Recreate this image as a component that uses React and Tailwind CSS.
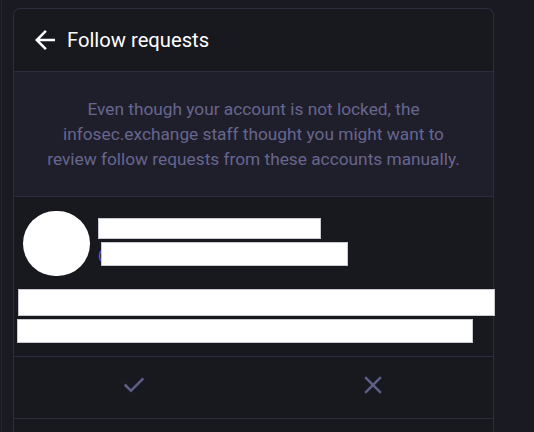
import React from 'react'

const font = { fontFamily: 'Roboto, "Noto Sans", sans-serif' }

function ArrowBack() {
  return (
    <svg viewBox="0 -960 960 960" className="w-[30px] h-[30px] fill-white shrink-0">
      <path d="m313-440 224 224-57 56-320-320 320-320 57 56-224 224h487v80H313Z" />
    </svg>
  )
}

function CheckIcon() {
  return (
    <svg viewBox="0 -960 960 960" className="w-[30px] h-[30px] fill-[#5f5e87]">
      <path d="M382-240 154-468l57-57 171 171 367-367 57 57-424 424Z" />
    </svg>
  )
}

function CloseIcon() {
  return (
    <svg viewBox="0 -960 960 960" className="w-[30px] h-[30px] fill-[#5f5e87]">
      <path d="m256-200-56-56 224-224-224-224 56-56 224 224 224-224 56 56-224 224 224 224-56 56-224-224-224 224Z" />
    </svg>
  )
}

export default function App() {
  return (
    <div style={font} className="w-[534px] h-[432px] overflow-hidden bg-[#191a22] flex">
      {/* left rail */}
      <div className="w-[12px] shrink-0 border-l border-[#24242f] ml-px" />

      {/* Column */}
      <div className="w-[481px] shrink-0 mt-[8px] bg-[#18181f] border border-b-0 border-[#2c2c3d] rounded-t-[7px] flex flex-col">
        {/* Header */}
        <div className="h-[63px] flex items-center pl-[16px] gap-[7px] border-b border-[#2c2c3d]">
          <ArrowBack />
          <h1 className="text-[20.2px] font-normal text-white leading-none">Follow requests</h1>
        </div>

        {/* Info banner */}
        <div className="bg-[#1f1f2b] px-[25px] pt-[25px] pb-[24px] border-b border-[#2c2c3d]">
          <p className="text-[17.3px] leading-[25px] text-center text-[#67668e]">
            Even though your account is not locked, the infosec.exchange staff thought you might want to review follow requests from these accounts manually.
          </p>
        </div>

        {/* Account */}
        <div className="pt-[14px] pb-[13px] border-b border-[#2c2c3d]">
          <div className="flex items-start pl-[9px] gap-[8px]">
            <div className="w-[67px] h-[65px] rounded-full bg-white shrink-0" />
            <div className="flex flex-col pt-[7px] gap-[3px]">
              <div className="w-[223px] h-[21px] bg-white border border-[#c9c9d1]" />
              <div className="relative flex items-center h-[24px]">
                <span className="text-[17px] text-[#6364ff] leading-none">@</span>
                <div className="absolute left-[3px] top-0 w-[247px] h-[24px] bg-white border border-[#c9c9d1]" />
              </div>
            </div>
          </div>
          <div className="mt-[13px] flex flex-col gap-[3px]">
            <div className="ml-[4px] w-[477px] h-[27px] bg-white border border-[#c9c9d1]" />
            <div className="ml-[3px] w-[456px] h-[24px] bg-white border border-[#c9c9d1]" />
          </div>
        </div>

        {/* Actions */}
        <div className="h-[62px] flex border-b border-[#2c2c3d]">
          <button className="flex-1 flex items-center justify-center pb-[5px]">
            <CheckIcon />
          </button>
          <button className="flex-1 flex items-center justify-center pb-[5px]">
            <CloseIcon />
          </button>
        </div>

        <div className="flex-1" />
      </div>
    </div>
  )
}
